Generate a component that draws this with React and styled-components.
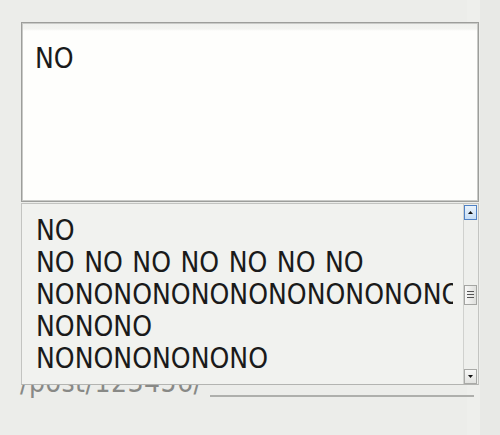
import styled, { createGlobalStyle } from 'styled-components';

const GlobalStyle = createGlobalStyle`
  html, body {
    margin: 0;
    padding: 0;
  }
  body {
    width: 500px;
    height: 435px;
    overflow: hidden;
    background: linear-gradient(90deg, #ecedea 0, #ecedea 467px, #eeefec 467px, #eeefec 480px, #e8e9e6 480px);
    font-family: "DejaVu Sans Condensed", "DejaVu Sans", sans-serif;
    font-stretch: condensed;
  }
`;

const Page = styled.div`
  padding: 22px 0 0 21px;
  width: 458px;
`;

const Form = styled.div`
  position: relative;
`;

const Editor = styled.div`
  box-sizing: border-box;
  height: 180px;
  border: 1px solid #9d9e9b;
  box-shadow: inset 0 0 0 1px #c9cac7;
  background: linear-gradient(#eff1ee 0, #f3f4f1 6px, #fefefc 8px);
  padding: 20px 13px;
  font-size: 28px;
  line-height: 32px;
  color: #1a1a1a;
`;

const PathRow = styled.div`
  display: flex;
  align-items: flex-start;
  margin-top: 165px;
  margin-left: -1px;
`;

const Prefix = styled.span`
  font-size: 28px;
  line-height: 32px;
  letter-spacing: 0.5px;
  color: #888986;
  white-space: nowrap;
`;

const SlugInput = styled.div`
  width: 264px;
  height: 28px;
  margin-left: 7px;
  border-bottom: 2px solid #aeafac;
`;

const Dropdown = styled.div`
  position: absolute;
  left: 0;
  top: 181px;
  box-sizing: border-box;
  width: 458px;
  height: 182px;
  display: flex;
  background: #f1f2ef;
  border: 1px solid #c3c4c1;
  border-bottom-color: #b3b4b1;
`;

const ListArea = styled.div`
  flex: 1;
  padding: 11px 0 0 14px;
  overflow: hidden;
`;

const ListClip = styled.div`
  margin-right: 10px;
  overflow: hidden;
`;

const Item = styled.div`
  font-size: 28px;
  line-height: 32px;
  color: #1a1a1a;
  white-space: nowrap;
  word-spacing: 1.5px;
`;

const Track = styled.div`
  width: 14px;
  display: flex;
  flex-direction: column;
  justify-content: space-between;
  background: #eeefec;
  border-left: 1px solid #d0d1ce;
  padding: 1px 0 0 0;
`;

const ScrollButton = styled.div`
  box-sizing: border-box;
  width: 13px;
  height: 15px;
  display: flex;
  align-items: center;
  justify-content: center;
  border: 1px solid ${({ $active }) => ($active ? '#4f81c4' : '#a9aaa7')};
  background: ${({ $active }) =>
    $active
      ? 'linear-gradient(#eaf3fc, #c7def5)'
      : 'linear-gradient(#f7f7f6, #e2e3e0)'};
`;

const Thumb = styled.div`
  box-sizing: border-box;
  width: 13px;
  height: 20px;
  display: flex;
  flex-direction: column;
  align-items: center;
  justify-content: center;
  gap: 2px;
  border: 1px solid #a4a5a2;
  background: linear-gradient(90deg, #f8f8f7, #dfe0dd);
`;

const Grip = styled.span`
  width: 7px;
  height: 1px;
  background: #555;
`;

const Arrow = ({ up }) => (
  <svg width="5" height="3" viewBox="0 0 5 3">
    <path d={up ? 'M0 3 L2.5 0 L5 3 Z' : 'M0 0 L2.5 3 L5 0 Z'} fill="#111" />
  </svg>
);

const items = [
  'NO',
  'NO NO NO NO NO NO NO',
  'NONONONONONONONONONONONONO',
  'NONONO',
  'NONONONONONO',
];

export default function App() {
  return (
    <>
      <GlobalStyle />
      <Page>
        <Form>
          <Editor>NO</Editor>
          <PathRow>
            <Prefix>/post/123456/</Prefix>
            <SlugInput />
          </PathRow>
          <Dropdown>
            <ListArea>
              <ListClip>
                {items.map((text, i) => (
                  <Item key={i}>{text}</Item>
                ))}
              </ListClip>
            </ListArea>
            <Track>
              <ScrollButton $active>
                <Arrow up />
              </ScrollButton>
              <Thumb>
                <Grip />
                <Grip />
                <Grip />
              </Thumb>
              <ScrollButton>
                <Arrow />
              </ScrollButton>
            </Track>
          </Dropdown>
        </Form>
      </Page>
    </>
  );
}
